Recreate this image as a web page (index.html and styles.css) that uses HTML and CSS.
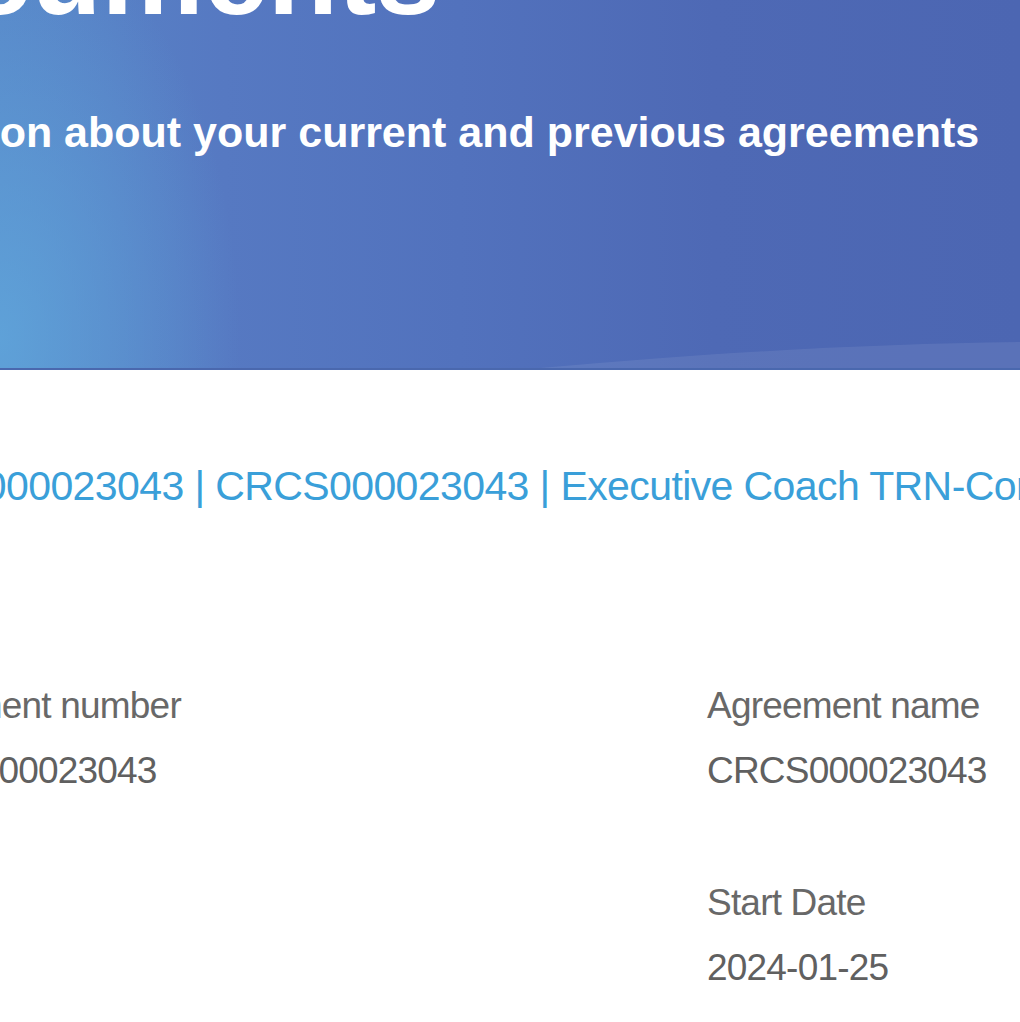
FILE: index.html
```html
<!DOCTYPE html>
<html lang="en">
<head>
<meta charset="utf-8">
<title>Documents</title>
<link rel="stylesheet" href="styles.css">
</head>
<body>
<header class="banner">
  <div class="banner-inner">
    <h1 class="title">Documents</h1>
    <p class="subtitle">Find information about your current and previous agreements</p>
  </div>
  <svg class="wave" viewBox="0 0 1020 40" preserveAspectRatio="none" aria-hidden="true">
    <path d="M540 40 C 720 24, 870 16, 1020 14 L1020 40 Z" fill="rgba(255,255,255,0.08)"/>
  </svg>
</header>
<main class="content">
  <h2 class="agreement-title">CRCS000023043 | CRCS000023043 | Executive Coach TRN-Contract</h2>
  <div class="fields">
    <div class="column">
      <div class="field">
        <div class="label">Agreement number</div>
        <div class="value">CRCS000023043</div>
      </div>
    </div>
    <div class="column">
      <div class="field">
        <div class="label">Agreement name</div>
        <div class="value">CRCS000023043</div>
      </div>
      <div class="field">
        <div class="label">Start Date</div>
        <div class="value">2024-01-25</div>
      </div>
    </div>
  </div>
</main>
</body>
</html>
```
FILE: styles.css
```css
html, body {
  margin: 0;
  padding: 0;
  background: #ffffff;
  overflow: hidden;
}
body {
  font-family: "Liberation Sans", Arial, Helvetica, sans-serif;
  width: 1020px;
}
.banner {
  position: relative;
  height: 368px;
  overflow: hidden;
  border-bottom: 2px solid #4a68ae;
  background:
    radial-gradient(ellipse 240px 420px at 0% 92%, rgba(96, 168, 220, 0.8), rgba(96, 168, 220, 0) 100%),
    linear-gradient(90deg, #5886c8 0%, #5679c2 22%, #5272bd 45%, #4e69b5 70%, #4c66b2 100%);
}
.banner-inner {
  margin-left: -287px;
  white-space: nowrap;
}
.title {
  margin: -83px 0 0 101px;
  font-size: 115px;
  line-height: 115px;
  font-weight: 700;
  color: #ffffff;
}
.subtitle {
  margin: 75px 0 0 0;
  font-size: 43px;
  line-height: 50px;
  font-weight: 700;
  color: #ffffff;
}
.wave {
  position: absolute;
  left: 0;
  bottom: 0;
  width: 1020px;
  height: 40px;
}
.content {
  padding-top: 86px;
  margin-left: -130px;
}
.agreement-title {
  margin: 0;
  font-size: 41px;
  line-height: 60px;
  font-weight: 400;
  letter-spacing: -0.6px;
  color: #3a9fd9;
  white-space: nowrap;
}
.fields {
  display: grid;
  grid-template-columns: 830px 1fr;
  margin-top: 157px;
  margin-left: 7px;
}
.column {
  display: flex;
  flex-direction: column;
  gap: 67px;
}
.label, .value {
  font-size: 37px;
  line-height: 65px;
  letter-spacing: -0.8px;
  color: #686868;
  white-space: nowrap;
}
.value {
  color: #606060;
}
```
